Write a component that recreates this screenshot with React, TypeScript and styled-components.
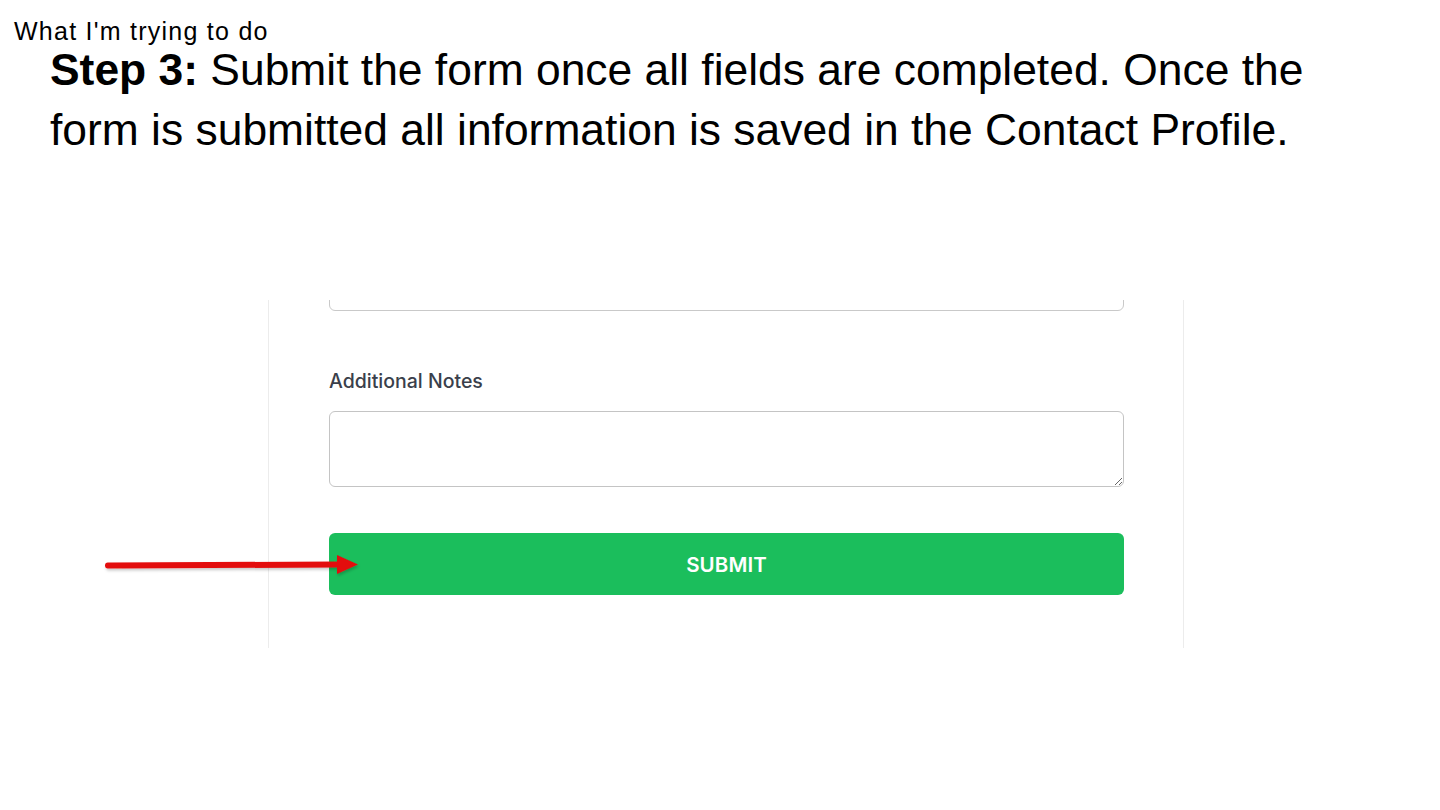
import React from "react";
import styled, { createGlobalStyle } from "styled-components";

const Global = createGlobalStyle`
  html, body { margin: 0; padding: 0; background: #ffffff; }
  body { font-family: "Liberation Sans", Arial, sans-serif; }
`;

const Page = styled.div`
  width: 1440px;
  height: 810px;
  position: relative;
  overflow: hidden;
  background: #fff;
`;

const Caption = styled.div`
  padding: 23px 0 0 14px;
  font-size: 25px;
  line-height: 17px;
  letter-spacing: 1.25px;
  color: #000;
`;

const Heading = styled.p`
  margin: 0;
  padding-left: 50px;
  width: 1300px;
  font-size: 44.4px;
  line-height: 60px;
  color: #000;
  b { font-weight: 700; }
`;

const Shot = styled.div`
  position: relative;
  margin: 140px 0 0 268px;
  width: 916px;
  height: 348px;
  box-sizing: border-box;
  border-left: 1.5px solid #ececec;
  border-right: 1.5px solid #ececec;
`;

const Clip = styled.div`
  height: 100%;
  overflow: hidden;
  padding: 0 59px 0 60px;
  display: flex;
  flex-direction: column;
  font-family: Inter, "Liberation Sans", sans-serif;
`;

const TopInput = styled.div`
  margin-top: -39px;
  height: 50px;
  flex: none;
  border: 1.5px solid #c9c9c9;
  border-radius: 6px;
  box-sizing: border-box;
`;

const Label = styled.div`
  margin-top: 59px;
  font-size: 19.5px;
  font-weight: 500;
  color: #3a3f4b;
  line-height: 22px;
`;

const TextArea = styled.textarea`
  margin-top: 19px;
  height: 76px;
  flex: none;
  box-sizing: border-box;
  border: 1.5px solid #c4c4c4;
  border-radius: 6px;
  resize: vertical;
  font-family: inherit;
  outline: none;
`;

const Submit = styled.button`
  margin-top: 46px;
  height: 62px;
  flex: none;
  border: none;
  border-radius: 6px;
  background: #1bbe5c;
  color: #fff;
  font-family: Inter, "Liberation Sans", sans-serif;
  font-size: 20.5px;
  font-weight: 600;
  letter-spacing: 0.1px;
`;

const Arrow = styled.svg`
  position: absolute;
  left: -168px;
  top: 250px;
  overflow: visible;
`;

export default function App() {
  return (
    <Page>
      <Global />
      <Caption>What I'm trying to do</Caption>
      <Heading>
        <b>Step 3:</b> Submit the form once all fields are completed. Once the
        form is submitted all information is saved in the Contact Profile.
      </Heading>
      <Shot>
        <Clip>
          <TopInput />
          <Label>Additional Notes</Label>
          <TextArea />
          <Submit>SUBMIT</Submit>
        </Clip>
        <Arrow width="260" height="30" viewBox="0 0 260 30">
          <defs>
            <filter id="sh" x="-10%" y="-50%" width="120%" height="200%">
              <feDropShadow dx="1" dy="2" stdDeviation="1.5" floodColor="#000" floodOpacity="0.22" />
            </filter>
          </defs>
          <g filter="url(#sh)">
            <line x1="7" y1="15.5" x2="240" y2="14.5" stroke="#e3100f" strokeWidth="6" strokeLinecap="round" />
            <polygon points="236,5 257,14.5 236,24" fill="#e3100f" />
          </g>
        </Arrow>
      </Shot>
    </Page>
  );
}
